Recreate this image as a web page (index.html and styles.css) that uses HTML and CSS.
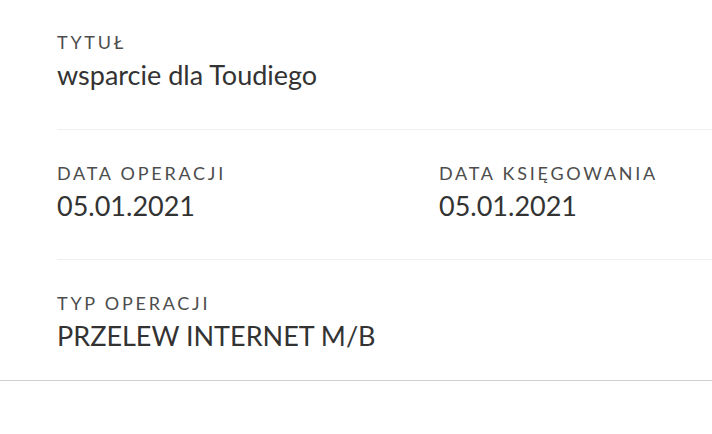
FILE: index.html
```html
<!DOCTYPE html>
<html lang="pl">
<head>
    <meta charset="UTF-8">
    <meta name="viewport" content="width=device-width, initial-scale=1.0">
    <title>Szczegóły operacji</title>
    <link rel="stylesheet" href="styles.css">
</head>
<body>
    <div class="details">
        <div class="row first">
            <div class="field">
                <div class="label">Tytuł</div>
                <div class="value">wsparcie dla Toudiego</div>
            </div>
        </div>

        <div class="row">
            <div class="field">
                <div class="label">Data operacji</div>
                <div class="value">05.01.2021</div>
            </div>
            <div class="field">
                <div class="label">Data księgowania</div>
                <div class="value">05.01.2021</div>
            </div>
        </div>

        <div class="row last">
            <div class="field">
                <div class="label">Typ operacji</div>
                <div class="value">PRZELEW INTERNET M/B</div>
            </div>
        </div>
    </div>
</body>
</html>
```

FILE: styles.css
```css
body {
    margin: 0;
    background-color: #fff;
    font-family: Lato, "Open Sans", Arial, sans-serif;
    color: #333;
}
.details {
    border-bottom: 1px solid #cfcfcf;
}
.row {
    display: grid;
    grid-template-columns: 382px 1fr;
    margin-left: 57px;
    padding: 33px 0 37px;
    border-bottom: 1px solid #efefef;
}
.row.first {
    padding-top: 32px;
    padding-bottom: 38px;
}
.row.last {
    border-bottom: none;
    padding-bottom: 28px;
}
.field {
    display: flex;
    flex-direction: column;
    gap: 7px;
}
.label {
    font-size: 18px;
    line-height: 20px;
    letter-spacing: 2.75px;
    text-transform: uppercase;
    color: #4d4d4d;
}
.value {
    font-size: 27px;
    line-height: 32px;
    color: #333;
}
```
